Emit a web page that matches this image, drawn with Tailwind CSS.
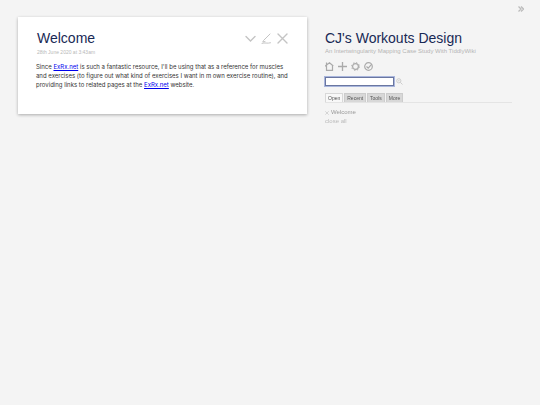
<!DOCTYPE html>
<html lang="en">
<head>
    <meta charset="UTF-8">
    <meta name="viewport" content="width=device-width, initial-scale=1.0">
    <title>CJ's Workouts Design</title>
    <script src="https://cdn.jsdelivr.net/npm/@tailwindcss/browser@4"></script>
</head>
<body class="min-h-screen bg-[#f4f4f4] font-['Liberation_Sans',sans-serif] text-[#333333]">
    <!-- Sidebar toggle -->
    <button type="button" aria-label="Hide sidebar" class="absolute right-4 top-1 text-[#bbbbbb]">
        <svg class="size-[6px] mt-[2px]" viewBox="0 0 6 6" fill="none" stroke="currentColor" stroke-width="1.3"><path d="M.5.5 3 3 .5 5.500M3 .5 5.500 3 3 5.500"/></svg>
    </button>

    <div class="flex items-start gap-[18px] pl-[18px] pr-7 pt-[17px]">
        <!-- Story river -->
        <main class="flex-[289_1_0%]">
            <article class="border border-white bg-white px-[17px] pt-[10px] pb-6 shadow-[0px_1px_3px_rgba(0,0,0,0.3)]">
                <header class="flex items-start justify-between pl-px pr-px">
                    <h2 class="text-[14px] leading-5 text-[#182955]">Welcome</h2>
                    <div class="mt-[5px] flex gap-[5px] text-[#c4c4c4]">
                        <button type="button" aria-label="More"><svg class="size-[11px]" viewBox="0 0 11 11" fill="none" stroke="currentColor" stroke-width="1.400" stroke-linecap="round"><path d="M1 3.500 5.500 8 10 3.500"/></svg></button>
                        <button type="button" aria-label="Edit"><svg class="size-[11px]" viewBox="0 0 11 11" fill="none" stroke="currentColor" stroke-linecap="round"><path d="M9 1 2.500 7.500 1.800 9 4 8.500M1 10.300C4 9.300 6 10.800 9.500 9.800"/></svg></button>
                        <button type="button" aria-label="Close"><svg class="size-[11px]" viewBox="0 0 11 11" fill="none" stroke="currentColor" stroke-width="1.400" stroke-linecap="round"><path d="M1 1 10 10M10 1 1 10"/></svg></button>
                    </div>
                </header>
                <p class="pl-px text-[5px] leading-[8px] text-[#b8b8b8]">28th June 2020 at 3:43am</p>
                <p class="mt-[6px] whitespace-nowrap font-['Inter',sans-serif] text-[6px] leading-[9px]">Since <a href="#" class="text-[#0000ee] underline">ExRx.net</a> is such a fantastic resource, I'll be using that as a reference for muscles<br>and exercises (to figure out what kind of exercises I want in m own exercise routine), and<br>providing links to related pages at the <a href="#" class="text-[#0000ee] underline">ExRx.net</a> website.</p>
            </article>
        </main>

        <!-- Sidebar -->
        <aside class="flex-[187_1_0%] pt-[11px]">
            <h1 class="whitespace-nowrap text-[14px] leading-5 text-[#182955]">CJ's Workouts Design</h1>
            <p class="whitespace-nowrap text-[6px] leading-[6px] text-[#b4b4b4]">An Intertwingularity Mapping Case Study With TiddlyWiki</p>
            <div class="mt-2 flex gap-1 text-[#aaaaaa]">
                <button type="button" aria-label="Home"><svg class="size-[9px]" viewBox="0 0 9 9" fill="none" stroke="currentColor" stroke-width="1.200"><path d="M0 4.300 1.500 3 4.500.8 8.300 4M1.500.5V8.300H7.500V3.500"/></svg></button>
                <button type="button" aria-label="New tiddler"><svg class="size-[9px]" viewBox="0 0 9 9" fill="none" stroke="currentColor" stroke-width="1.300"><path d="M4.500 0V9M0 4.500H9"/></svg></button>
                <button type="button" aria-label="Control panel"><svg class="size-[9px]" viewBox="0 0 9 9" fill="none" stroke="currentColor"><circle cx="4.500" cy="4.500" r="2.900" stroke-width="1.200"/><circle cx="4.500" cy="4.500" r="3.900" stroke-dasharray="1.400 1.663"/></svg></button>
                <button type="button" aria-label="Save"><svg class="size-[9px]" viewBox="0 0 9 9" fill="none" stroke="currentColor" stroke-width="1.200"><circle cx="4.500" cy="4.500" r="3.800"/><path d="M2.500 4.500 4.200 6.200 8 1.800"/></svg></button>
            </div>
            <div class="mt-[6px] flex items-center gap-[2px]">
                <input type="search" aria-label="Search" autofocus class="h-[9px] w-[69px] border border-[#6a76a0] bg-white px-px text-[6px] outline-1 outline-offset-0 outline-[#a9b6dd]">
                <button type="button" aria-label="Advanced search" class="text-[#cccccc]"><svg class="size-[7px]" viewBox="0 0 7 7" fill="none" stroke="currentColor"><circle cx="2.800" cy="2.800" r="2.100"/><path d="M4.300 4.300 6.500 6.500M2 2.800H3.600"/></svg></button>
            </div>
            <div class="mt-[7px] flex gap-px border-b border-[#e4e4e4] text-[5px] leading-[8px] text-[#555555]">
                <button type="button" class="border border-b-0 border-[#d8d8d8] bg-[#f8f8f8] px-[2px]">Open</button>
                <button type="button" class="border border-b-0 border-[#cccccc] bg-[#d8d8d8] px-[2px]">Recent</button>
                <button type="button" class="border border-b-0 border-[#cccccc] bg-[#d8d8d8] px-[2px]">Tools</button>
                <button type="button" class="border border-b-0 border-[#cccccc] bg-[#d8d8d8] px-[2px]">More</button>
            </div>
            <div class="mt-[5px] text-[6px] leading-[9px] text-[#aaaaaa]">
                <div class="flex items-center gap-[2px]">
                    <button type="button" aria-label="Close Welcome" class="text-[#cccccc]"><svg class="size-1" viewBox="0 0 4 4" fill="none" stroke="currentColor" stroke-width=".8"><path d="M.3.3 3.700 3.700M3.700.3.3 3.700"/></svg></button>
                    <a href="#" class="text-[#999999]">Welcome</a>
                </div>
                <button type="button" class="block text-[#bbbbbb]">close all</button>
            </div>
        </aside>
    </div>
</body>
</html>
